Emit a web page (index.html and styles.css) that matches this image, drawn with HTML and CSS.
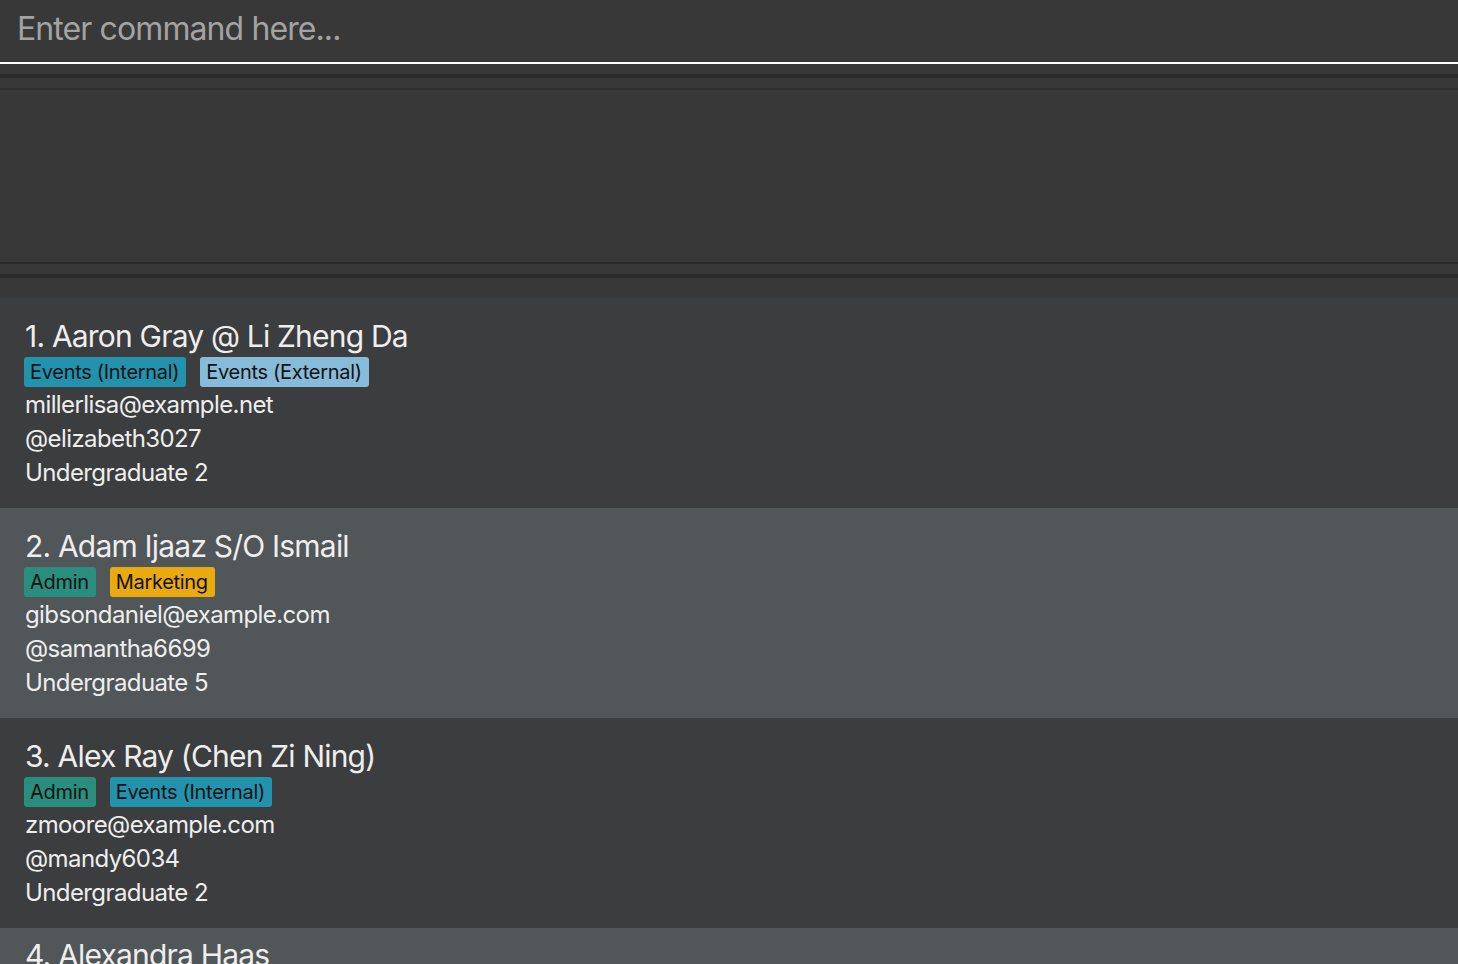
FILE: index.html
```html
<!DOCTYPE html>
<html>
<head>
<meta charset="utf-8">
<link rel="stylesheet" href="styles.css">
</head>
<body>
<div class="app">
  <div class="command-box">
    <input class="command-input" type="text" placeholder="Enter command here...">
  </div>
  <div class="pane-gap"></div>
  <div class="divider"></div>
  <div class="pane-gap"></div>
  <div class="result-display"></div>
  <div class="pane-gap"></div>
  <div class="divider"></div>
  <div class="list-gap"></div>
  <div class="person-list">
    <div class="card odd">
      <div class="name">1. Aaron Gray @ Li Zheng Da</div>
      <div class="tags">
        <span class="tag t-internal">Events (Internal)</span>
        <span class="tag t-external">Events (External)</span>
      </div>
      <div class="field">millerlisa@example.net</div>
      <div class="field">@elizabeth3027</div>
      <div class="field">Undergraduate 2</div>
    </div>
    <div class="card even">
      <div class="name">2. Adam Ijaaz S/O Ismail</div>
      <div class="tags">
        <span class="tag t-admin">Admin</span>
        <span class="tag t-marketing">Marketing</span>
      </div>
      <div class="field">gibsondaniel@example.com</div>
      <div class="field">@samantha6699</div>
      <div class="field">Undergraduate 5</div>
    </div>
    <div class="card odd">
      <div class="name">3. Alex Ray (Chen Zi Ning)</div>
      <div class="tags">
        <span class="tag t-admin">Admin</span>
        <span class="tag t-internal">Events (Internal)</span>
      </div>
      <div class="field">zmoore@example.com</div>
      <div class="field">@mandy6034</div>
      <div class="field">Undergraduate 2</div>
    </div>
    <div class="card even card-partial">
      <div class="name">4. Alexandra Haas</div>
    </div>
  </div>
</div>
</body>
</html>
```

FILE: styles.css
```css
html, body {
  margin: 0;
  padding: 0;
  background: #383838;
  overflow: hidden;
}
body {
  font-family: Inter, "Noto Sans", sans-serif;
  color: #eeeeee;
}
.app {
  display: flex;
  flex-direction: column;
  height: 964px;
  overflow: hidden;
}
.app > * {
  flex-shrink: 0;
}
.command-box {
  height: 62px;
  border-bottom: 2px solid #ffffff;
  background: #383838;
  display: flex;
  align-items: center;
}
.command-input {
  flex: 1;
  background: transparent;
  border: none;
  outline: none;
  font-family: Inter, "Noto Sans", sans-serif;
  font-size: 32px;
  letter-spacing: -0.9px;
  color: #eeeeee;
  padding: 0 0 6px 17px;
}
.command-input::placeholder {
  color: #a3a3a3;
}
.pane-gap {
  height: 10px;
}
.divider {
  height: 4px;
  background: #2a2a2a;
}
.result-display {
  height: 172px;
  border-top: 2px solid #2e2e2e;
  border-bottom: 2px solid #2a2a2a;
  background: #383838;
}
.list-gap {
  height: 20px;
}
.person-list {
  display: flex;
  flex-direction: column;
}
.card {
  height: 210px;
  flex-shrink: 0;
  box-sizing: border-box;
  padding: 20px 25px 0 25px;
}
.card-partial {
  height: 36px;
  padding-top: 9px;
}
.odd { background: #3c3d3f; }
.even { background: #515658; }
.name {
  font-size: 30px;
  line-height: 36px;
  letter-spacing: -0.8px;
  color: #eeeeee;
}
.tags {
  display: flex;
  gap: 14px;
  margin-top: 3px;
  margin-bottom: 1px;
  margin-left: -1px;
}
.tag {
  height: 30px;
  line-height: 30px;
  padding: 0 7px 0 6px;
  border-radius: 3px;
  font-size: 20px;
  color: #111111;
  letter-spacing: -0.3px;
}
.t-internal { background: #2392ad; }
.t-external { background: #86bcda; }
.t-admin { background: #2a8e7f; }
.t-marketing { background: #e9aa10; }
.field {
  font-size: 24px;
  line-height: 34px;
  letter-spacing: -0.6px;
  color: #eeeeee;
}
```
